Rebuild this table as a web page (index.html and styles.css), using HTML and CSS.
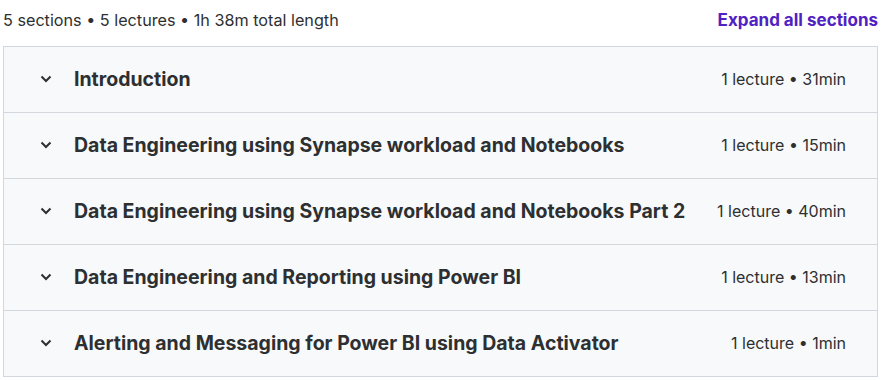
FILE: index.html
```html
<!DOCTYPE html>
<html>
<head>
<meta charset="utf-8">
<link rel="stylesheet" href="styles.css">
</head>
<body>
<div class="curriculum">
  <div class="summary">
    <span class="stats">5 sections • 5 lectures • 1h 38m total length</span>
    <button class="expand">Expand all sections</button>
  </div>
  <div class="sections">
    <div class="section">
      <svg class="chev" viewBox="0 0 12 8" width="12" height="8"><path d="M1.5 1.5 L6 6 L10.5 1.5" fill="none" stroke="#2d2f31" stroke-width="2"/></svg>
      <span class="title">Introduction</span>
      <span class="meta">1 lecture • 31min</span>
    </div>
    <div class="section">
      <svg class="chev" viewBox="0 0 12 8" width="12" height="8"><path d="M1.5 1.5 L6 6 L10.5 1.5" fill="none" stroke="#2d2f31" stroke-width="2"/></svg>
      <span class="title">Data Engineering using Synapse workload and Notebooks</span>
      <span class="meta">1 lecture • 15min</span>
    </div>
    <div class="section">
      <svg class="chev" viewBox="0 0 12 8" width="12" height="8"><path d="M1.5 1.5 L6 6 L10.5 1.5" fill="none" stroke="#2d2f31" stroke-width="2"/></svg>
      <span class="title">Data Engineering using Synapse workload and Notebooks Part 2</span>
      <span class="meta">1 lecture • 40min</span>
    </div>
    <div class="section">
      <svg class="chev" viewBox="0 0 12 8" width="12" height="8"><path d="M1.5 1.5 L6 6 L10.5 1.5" fill="none" stroke="#2d2f31" stroke-width="2"/></svg>
      <span class="title">Data Engineering and Reporting using Power BI</span>
      <span class="meta">1 lecture • 13min</span>
    </div>
    <div class="section">
      <svg class="chev" viewBox="0 0 12 8" width="12" height="8"><path d="M1.5 1.5 L6 6 L10.5 1.5" fill="none" stroke="#2d2f31" stroke-width="2"/></svg>
      <span class="title">Alerting and Messaging for Power BI using Data Activator</span>
      <span class="meta">1 lecture • 1min</span>
    </div>
  </div>
</div>
</body>
</html>
```
FILE: styles.css
```css
* { box-sizing: border-box; }
html, body { margin: 0; padding: 0; background: #fff; }
body {
  font-family: "Inter", "Liberation Sans", sans-serif;
  color: #2d2f31;
  padding: 0 3px;
}
.curriculum { width: 875px; }
.summary {
  display: flex;
  justify-content: space-between;
  align-items: center;
  height: 46px;
  padding-bottom: 6px;
}
.stats { font-size: 16.2px; color: #2d2f31; }
.expand {
  border: 0;
  background: none;
  padding: 0;
  font-family: inherit;
  font-size: 17px;
  font-weight: 700;
  color: #5022c3;
  cursor: pointer;
}
.sections { border: 1px solid #d1d7dc; border-bottom: 0; }
.section {
  display: flex;
  align-items: center;
  height: 66px;
  background: #f7f9fa;
  border-bottom: 1px solid #d1d7dc;
  padding: 0 31px 2px 36px;
}
.chev { flex: none; margin-right: 22px; }
.title { flex: 1; font-size: 19.5px; font-weight: 700; }
.meta { font-size: 16px; white-space: nowrap; }
```
